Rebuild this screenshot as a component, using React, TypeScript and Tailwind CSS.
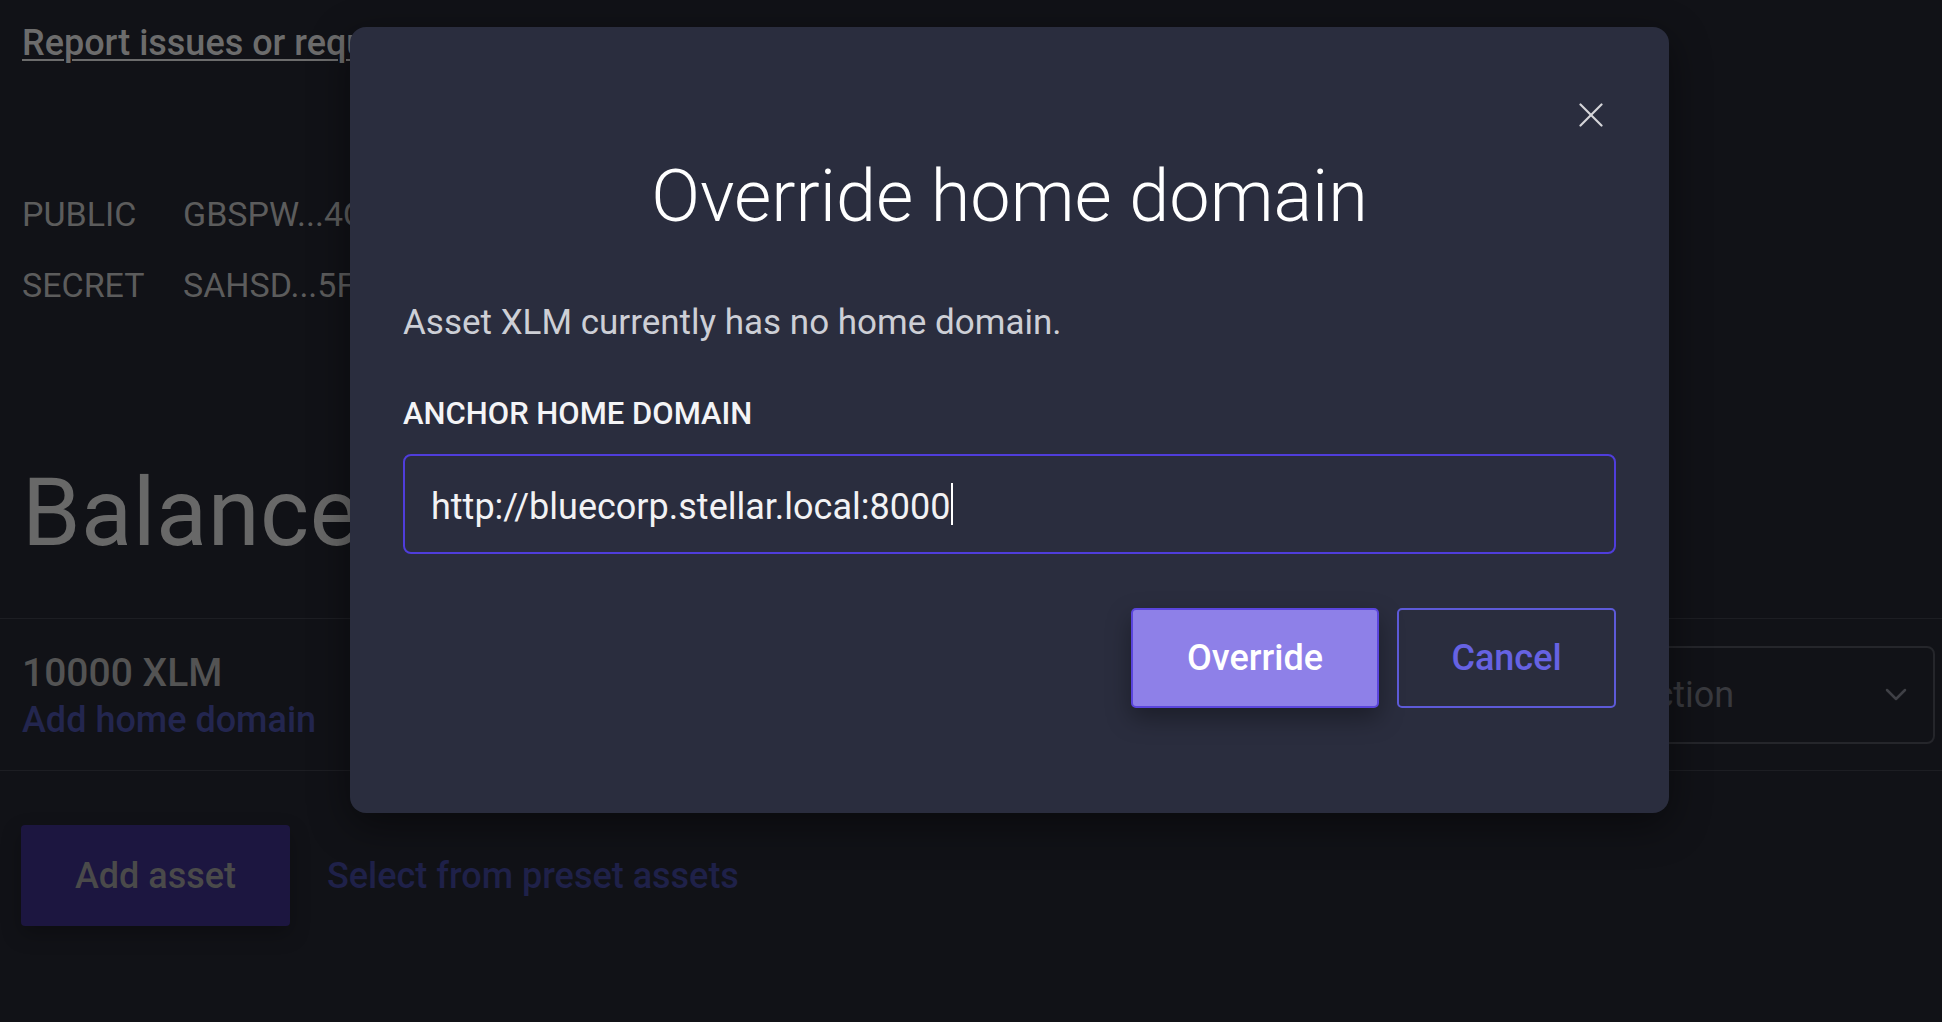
export default function App() {
  return (
    <div className="relative w-[1942px] h-[1022px] overflow-hidden bg-[#111217] font-['Roboto',sans-serif]">
      {/* Page behind the dialog */}
      <div className="pt-[25px]">
        <div className="pl-[22px]">
          <a className="block w-max text-[36px] leading-none font-medium text-[#6c6c6c] underline decoration-2 underline-offset-[4px]">
            Report issues or request features
          </a>
          <div className="mt-[136px] flex text-[34px] leading-none font-normal text-[#5c5c5c]">
            <span className="w-[161px]">PUBLIC</span>
            <span>GBSPW...4QXZ</span>
          </div>
          <div className="mt-[37px] flex text-[34px] leading-none font-normal text-[#5c5c5c]">
            <span className="w-[161px]">SECRET</span>
            <span>SAHSD...5FKL</span>
          </div>
          <div className="mt-[164px] text-[94px] leading-none font-normal tracking-[0.5px] text-[#686868]">Balances</div>
        </div>

        <div className="mt-[58px] h-[153px] border-y border-[#1d1e23] flex items-center justify-between pl-[22px] pr-[7px]">
          <div className="flex flex-col pt-[3px]">
            <span className="text-[39px] leading-none font-medium text-[#535353]">10000 XLM</span>
            <span className="mt-[9px] text-[36px] leading-none font-medium text-[#23264f]">Add home domain</span>
          </div>
          <div className="w-[440px] h-[98px] rounded-lg border-2 border-[#25262b] flex items-center justify-between pl-[30px] pr-[26px]">
            <span className="text-[36px] leading-none text-[#38393e]">Select action</span>
            <svg width="22" height="14" viewBox="0 0 22 14" fill="none">
              <polyline points="2,2 11,11 20,2" stroke="#3f4046" strokeWidth="2.5" strokeLinecap="round" strokeLinejoin="round" />
            </svg>
          </div>
        </div>

        <div className="mt-[54px] pl-[21px] flex items-center gap-[37px]">
          <div className="w-[269px] h-[101px] rounded bg-[#1c1640] flex items-center justify-center text-[36px] leading-none font-medium text-[#4a4a4a] shadow-[0_8px_20px_rgba(0,0,0,0.25)]">
            Add asset
          </div>
          <span className="text-[36px] leading-none font-medium text-[#1f2149]">Select from preset assets</span>
        </div>
      </div>

      {/* Dialog */}
      <div className="absolute left-[350px] top-[27px] w-[1319px] rounded-[16px] bg-[#2a2d3e] px-[53px] pt-[76px] pb-[105px] shadow-[0_12px_40px_rgba(0,0,0,0.45)]">
        <div className="flex justify-end pr-[13px]">
          <svg width="24" height="24" viewBox="0 0 24 24" fill="none" className="block">
            <line x1="1.5" y1="1.5" x2="22.5" y2="22.5" stroke="#d6d6da" strokeWidth="2.2" strokeLinecap="round" />
            <line x1="22.5" y1="1.5" x2="1.5" y2="22.5" stroke="#d6d6da" strokeWidth="2.2" strokeLinecap="round" />
          </svg>
        </div>
        <h2 className="mt-[34px] text-center text-[72px] leading-none font-light text-white">Override home domain</h2>
        <p className="mt-[72px] text-[35px] leading-none text-[#cdcfd6]">Asset XLM currently has no home domain.</p>
        <div className="mt-[58px] text-[31px] leading-none font-medium text-[#f4f4f6]">ANCHOR HOME DOMAIN</div>
        <div className="mt-[25px] h-[100px] rounded-lg border-2 border-[#4f3ddb] flex items-center pl-[26px]">
          <span className="mt-[5px] text-[36px] leading-none text-[#f2f2f4]">http://bluecorp.stellar.local:8000</span>
          <span className="ml-[1px] w-[2px] h-[42px] bg-white" />
        </div>
        <div className="mt-[54px] flex justify-end gap-[18px]">
          <button className="w-[248px] h-[100px] rounded-[5px] border-2 border-[#5a45dc] bg-[#8e80e8] text-white text-[36px] leading-none font-medium shadow-[0_10px_24px_rgba(0,0,0,0.35)]">
            Override
          </button>
          <button className="w-[219px] h-[100px] rounded-[5px] border-2 border-[#5d5ad8] bg-transparent text-[#6662e2] text-[36px] leading-none font-medium">
            Cancel
          </button>
        </div>
      </div>
    </div>
  );
}
